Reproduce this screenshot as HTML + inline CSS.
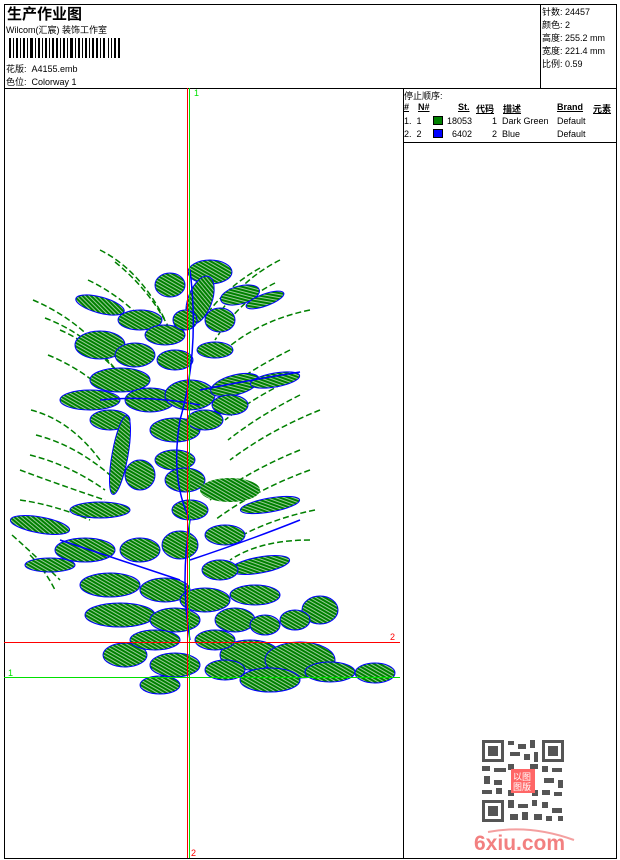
<!DOCTYPE html>
<html><head><meta charset="utf-8"><style>
*{margin:0;padding:0}
body{width:620px;height:860px;background:#fff;position:relative;overflow:hidden;font-family:"Liberation Sans","Noto Sans CJK SC",sans-serif;font-size:9px;color:#000}
.a{position:absolute;white-space:nowrap}
.l{position:absolute;background:#000}
</style></head><body>
<div class="l" style="left:4px;top:4px;width:613px;height:1px"></div>
<div class="l" style="left:4px;top:858px;width:613px;height:1px"></div>
<div class="l" style="left:4px;top:4px;width:1px;height:855px"></div>
<div class="l" style="left:616px;top:4px;width:1px;height:855px"></div>
<div class="l" style="left:4px;top:88px;width:613px;height:1px"></div>
<div class="l" style="left:540px;top:4px;width:1px;height:84px"></div>
<div class="l" style="left:403px;top:88px;width:1px;height:770px"></div>
<div class="l" style="left:403px;top:142px;width:213px;height:1px"></div>

<div class="a" style="left:7px;top:3px;font-size:15px;font-weight:bold;font-family:'Noto Sans CJK SC',sans-serif">生产作业图</div>
<div class="a" style="left:6px;top:23px">Wilcom(汇宸) 装饰工作室</div>
<svg class="a" style="left:9px;top:38px" width="112" height="20">
<g fill="#000">
<rect x="0" y="0" width="2" height="20"/><rect x="4" y="0" width="1" height="20"/><rect x="7" y="0" width="2" height="20"/><rect x="11" y="0" width="1" height="20"/><rect x="14" y="0" width="2" height="20"/><rect x="18" y="0" width="1" height="20"/><rect x="21" y="0" width="3" height="20"/><rect x="26" y="0" width="1" height="20"/><rect x="29" y="0" width="2" height="20"/><rect x="33" y="0" width="1" height="20"/><rect x="36" y="0" width="2" height="20"/><rect x="40" y="0" width="1" height="20"/><rect x="43" y="0" width="2" height="20"/><rect x="47" y="0" width="2" height="20"/><rect x="51" y="0" width="1" height="20"/><rect x="54" y="0" width="2" height="20"/><rect x="58" y="0" width="1" height="20"/><rect x="61" y="0" width="3" height="20"/><rect x="66" y="0" width="1" height="20"/><rect x="69" y="0" width="2" height="20"/><rect x="73" y="0" width="1" height="20"/><rect x="76" y="0" width="2" height="20"/><rect x="80" y="0" width="1" height="20"/><rect x="83" y="0" width="2" height="20"/><rect x="87" y="0" width="2" height="20"/><rect x="91" y="0" width="1" height="20"/><rect x="94" y="0" width="2" height="20"/><rect x="99" y="0" width="1" height="20"/><rect x="102" y="0" width="1" height="20"/><rect x="105" y="0" width="2" height="20"/><rect x="109" y="0" width="2" height="20"/>
</g></svg>
<div class="a" style="left:6px;top:62px">花版:&nbsp; A4155.emb</div>
<div class="a" style="left:6px;top:75px">色位:&nbsp; Colorway 1</div>

<div class="a" style="left:542px;top:6px;line-height:13px">针数: 24457<br>颜色: 2<br>高度: 255.2 mm<br>宽度: 221.4 mm<br>比例: 0.59</div>

<div class="a" style="left:404px;top:89px">停止顺序:</div>
<div class="a" style="left:404px;top:102px;font-weight:bold;text-decoration:underline">#</div>
<div class="a" style="left:418px;top:102px;font-weight:bold;text-decoration:underline">N#</div>
<div class="a" style="left:458px;top:102px;font-weight:bold;text-decoration:underline">St.</div>
<div class="a" style="left:476px;top:102px;font-weight:bold;text-decoration:underline">代码</div>
<div class="a" style="left:503px;top:102px;font-weight:bold;text-decoration:underline">描述</div>
<div class="a" style="left:557px;top:102px;font-weight:bold;text-decoration:underline">Brand</div>
<div class="a" style="left:593px;top:102px;font-weight:bold;text-decoration:underline">元素</div>
<div class="a" style="left:404px;top:116px">1.&nbsp; 1</div>
<div class="a" style="left:433px;top:116px;width:10px;height:9px;background:#008000;border:1px solid #000;box-sizing:border-box"></div>
<div class="a" style="left:447px;top:116px">18053</div>
<div class="a" style="left:492px;top:116px">1&nbsp; Dark Green</div>
<div class="a" style="left:557px;top:116px">Default</div>
<div class="a" style="left:404px;top:129px">2.&nbsp; 2</div>
<div class="a" style="left:433px;top:129px;width:10px;height:9px;background:#0000ff;border:1px solid #000;box-sizing:border-box"></div>
<div class="a" style="left:452px;top:129px">6402</div>
<div class="a" style="left:492px;top:129px">2&nbsp; Blue</div>
<div class="a" style="left:557px;top:129px">Default</div>

<svg class="a" style="left:0;top:0" width="403" height="860">
<defs>
<pattern id="h" width="3" height="3" patternUnits="userSpaceOnUse" patternTransform="rotate(30)">
<rect width="3" height="2" fill="#008000"/><rect y="2" width="3" height="1" fill="#9c9"/>
</pattern>
</defs>
<g stroke="#008000" fill="none" stroke-width="1.5" stroke-dasharray="6 3">
<path d="M100 250 Q140 270 165 320"/><path d="M115 262 Q150 290 170 330"/><path d="M88 280 Q130 300 160 340"/>
<path d="M33 300 Q80 320 110 360"/><path d="M45 318 Q90 335 120 375"/><path d="M48 355 Q85 370 115 400"/><path d="M60 330 Q95 345 125 380"/>
<path d="M280 260 Q240 280 215 320"/><path d="M275 283 Q240 300 215 340"/><path d="M310 310 Q260 320 225 350"/><path d="M260 268 Q230 285 210 310"/>
<path d="M290 350 Q250 370 225 390"/><path d="M290 380 Q250 400 225 420"/><path d="M320 410 Q270 430 230 460"/><path d="M300 395 Q260 415 228 440"/>
<path d="M31 410 Q70 420 100 460"/><path d="M36 435 Q75 445 110 475"/><path d="M20 470 Q60 485 105 500"/><path d="M30 455 Q70 465 105 490"/>
<path d="M300 450 Q250 470 210 500"/><path d="M310 470 Q255 490 215 520"/><path d="M310 540 Q260 540 230 560"/><path d="M315 510 Q265 520 225 545"/>
<path d="M12 535 Q40 560 60 580"/><path d="M30 555 Q45 570 55 590"/><path d="M20 500 Q55 505 90 520"/>
</g>
<g fill="url(#h)" stroke="#0000ff" stroke-width="1">
<ellipse cx="210" cy="272" rx="22" ry="12"/><ellipse cx="170" cy="285" rx="15" ry="12"/><ellipse cx="200" cy="300" rx="12" ry="25" transform="rotate(20 200 300)"/>
<ellipse cx="240" cy="295" rx="20" ry="9" transform="rotate(-15 240 295)"/><ellipse cx="265" cy="300" rx="20" ry="6" transform="rotate(-20 265 300)"/>
<ellipse cx="100" cy="305" rx="25" ry="8" transform="rotate(15 100 305)"/><ellipse cx="140" cy="320" rx="22" ry="10"/>
<ellipse cx="165" cy="335" rx="20" ry="10"/><ellipse cx="220" cy="320" rx="15" ry="12"/><ellipse cx="185" cy="320" rx="12" ry="10"/>
<ellipse cx="100" cy="345" rx="25" ry="14"/><ellipse cx="135" cy="355" rx="20" ry="12"/><ellipse cx="175" cy="360" rx="18" ry="10"/><ellipse cx="215" cy="350" rx="18" ry="8"/>
<ellipse cx="120" cy="380" rx="30" ry="12"/><ellipse cx="90" cy="400" rx="30" ry="10"/><ellipse cx="150" cy="400" rx="25" ry="12"/>
<ellipse cx="190" cy="395" rx="25" ry="15"/><ellipse cx="235" cy="385" rx="25" ry="10" transform="rotate(-15 235 385)"/>
<ellipse cx="275" cy="380" rx="25" ry="7" transform="rotate(-10 275 380)"/><ellipse cx="110" cy="420" rx="20" ry="10"/><ellipse cx="230" cy="405" rx="18" ry="10"/>
<ellipse cx="175" cy="430" rx="25" ry="12"/><ellipse cx="205" cy="420" rx="18" ry="10"/><ellipse cx="120" cy="455" rx="8" ry="40" transform="rotate(10 120 455)"/>
<ellipse cx="175" cy="460" rx="20" ry="10"/><ellipse cx="140" cy="475" rx="15" ry="15"/>
<ellipse cx="185" cy="480" rx="20" ry="12"/><ellipse cx="230" cy="490" rx="30" ry="12" stroke="none"/>
<ellipse cx="190" cy="510" rx="18" ry="10"/><ellipse cx="100" cy="510" rx="30" ry="8"/><ellipse cx="270" cy="505" rx="30" ry="7" transform="rotate(-10 270 505)"/>
<ellipse cx="40" cy="525" rx="30" ry="8" transform="rotate(10 40 525)"/><ellipse cx="85" cy="550" rx="30" ry="12"/><ellipse cx="50" cy="565" rx="25" ry="7"/>
<ellipse cx="140" cy="550" rx="20" ry="12"/><ellipse cx="180" cy="545" rx="18" ry="14"/><ellipse cx="225" cy="535" rx="20" ry="10"/>
<ellipse cx="260" cy="565" rx="30" ry="8" transform="rotate(-10 260 565)"/><ellipse cx="220" cy="570" rx="18" ry="10"/>
<ellipse cx="110" cy="585" rx="30" ry="12"/><ellipse cx="165" cy="590" rx="25" ry="12"/><ellipse cx="205" cy="600" rx="25" ry="12"/>
<ellipse cx="255" cy="595" rx="25" ry="10"/><ellipse cx="120" cy="615" rx="35" ry="12"/><ellipse cx="175" cy="620" rx="25" ry="12"/>
<ellipse cx="235" cy="620" rx="20" ry="12"/><ellipse cx="320" cy="610" rx="18" ry="14"/><ellipse cx="265" cy="625" rx="15" ry="10"/><ellipse cx="295" cy="620" rx="15" ry="10"/>
<ellipse cx="125" cy="655" rx="22" ry="12"/><ellipse cx="175" cy="665" rx="25" ry="12"/><ellipse cx="160" cy="685" rx="20" ry="9"/>
<ellipse cx="250" cy="655" rx="30" ry="15"/><ellipse cx="300" cy="660" rx="35" ry="18"/><ellipse cx="330" cy="672" rx="25" ry="10"/>
<ellipse cx="270" cy="680" rx="30" ry="12"/><ellipse cx="375" cy="673" rx="20" ry="10"/><ellipse cx="225" cy="670" rx="20" ry="10"/>
<ellipse cx="155" cy="640" rx="25" ry="10"/><ellipse cx="215" cy="640" rx="20" ry="10"/>
</g>
<g stroke="#0000ff" fill="none" stroke-width="1.5">
<path d="M190 270 Q200 350 180 420 Q170 480 190 520 Q180 580 190 640"/>
<path d="M60 540 Q120 560 180 580"/><path d="M190 560 Q250 540 300 520"/>
<path d="M100 400 Q150 395 200 405"/><path d="M200 390 Q250 380 300 372"/>
</g>
<line x1="187.5" y1="88" x2="187.5" y2="858" stroke="#ff0000"/>
<line x1="189.5" y1="88" x2="189.5" y2="858" stroke="#00e000"/>
<line x1="4" y1="642.5" x2="400" y2="642.5" stroke="#ff0000"/>
<line x1="4" y1="677.5" x2="400" y2="677.5" stroke="#00e000"/>
<text x="194" y="96" fill="#00e000" font-size="9" font-family="Liberation Sans">1</text>
<text x="390" y="640" fill="#ff0000" font-size="9" font-family="Liberation Sans">2</text>
<text x="8" y="676" fill="#00e000" font-size="9" font-family="Liberation Sans">1</text>
<text x="191" y="856" fill="#ff0000" font-size="9" font-family="Liberation Sans">2</text>
</svg>

<svg class="a" style="left:480px;top:738px" width="86" height="86">
<rect width="86" height="86" fill="#fff"/>
<g fill="#555">
<rect x="2" y="2" width="22" height="22"/><rect x="62" y="2" width="22" height="22"/><rect x="2" y="62" width="22" height="22"/>
</g>
<g fill="#fff"><rect x="5" y="5" width="16" height="16"/><rect x="65" y="5" width="16" height="16"/><rect x="5" y="65" width="16" height="16"/></g>
<g fill="#555"><rect x="8" y="8" width="10" height="10"/><rect x="68" y="8" width="10" height="10"/><rect x="8" y="68" width="10" height="10"/>
<rect x="28" y="3" width="6" height="4"/><rect x="38" y="6" width="8" height="5"/><rect x="50" y="2" width="5" height="8"/><rect x="30" y="14" width="10" height="4"/><rect x="44" y="16" width="6" height="6"/><rect x="54" y="14" width="4" height="10"/>
<rect x="2" y="28" width="8" height="5"/><rect x="14" y="30" width="12" height="4"/><rect x="4" y="38" width="6" height="8"/><rect x="14" y="42" width="8" height="5"/><rect x="2" y="52" width="10" height="4"/><rect x="16" y="50" width="6" height="6"/>
<rect x="62" y="28" width="6" height="6"/><rect x="72" y="30" width="10" height="4"/><rect x="64" y="40" width="10" height="5"/><rect x="78" y="42" width="5" height="8"/><rect x="62" y="52" width="8" height="5"/><rect x="74" y="54" width="8" height="4"/>
<rect x="28" y="62" width="6" height="8"/><rect x="38" y="66" width="10" height="4"/><rect x="52" y="62" width="5" height="6"/><rect x="30" y="76" width="8" height="6"/><rect x="42" y="74" width="6" height="8"/><rect x="62" y="64" width="6" height="6"/><rect x="72" y="70" width="10" height="5"/><rect x="54" y="76" width="8" height="6"/><rect x="66" y="78" width="6" height="5"/><rect x="78" y="78" width="5" height="5"/>
<rect x="28" y="26" width="6" height="6"/><rect x="28" y="52" width="6" height="6"/><rect x="50" y="26" width="8" height="5"/><rect x="52" y="52" width="6" height="6"/></g>
<rect x="31" y="31" width="24" height="24" fill="#f66"/>
<text x="33" y="42" font-size="9" fill="#fff" font-family="Noto Sans CJK SC,sans-serif">以图</text>
<text x="33" y="52" font-size="9" fill="#fff" font-family="Noto Sans CJK SC,sans-serif">图版</text>
</svg>
<svg class="a" style="left:470px;top:826px" width="110" height="28">
<path d="M18 6 Q60 -2 104 14" stroke="#f4a0a0" stroke-width="2" fill="none"/>
<text x="4" y="24" font-size="21" font-weight="bold" fill="#f28080" font-family="Liberation Sans,sans-serif">6xiu.com</text>
</svg>
</body></html>
